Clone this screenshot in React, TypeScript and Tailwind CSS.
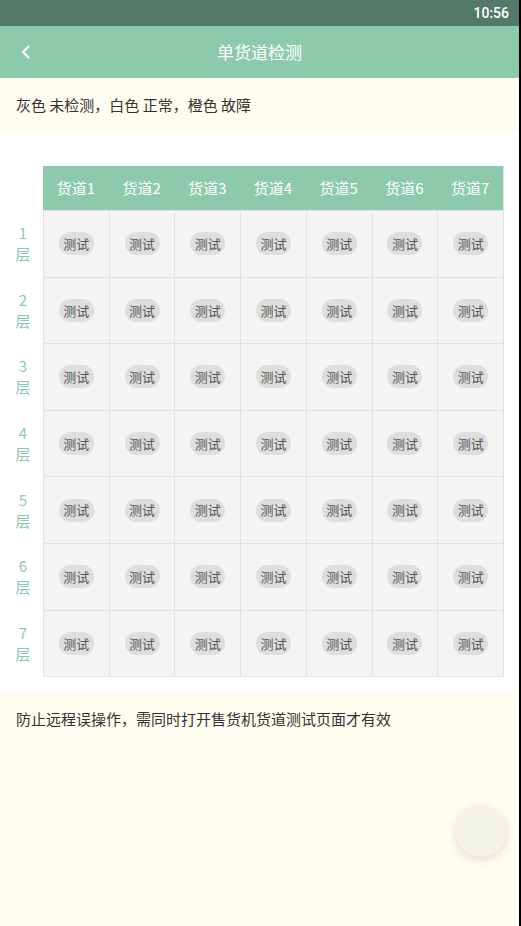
import React from "react";

const cols = [1, 2, 3, 4, 5, 6, 7];
const rows = [1, 2, 3, 4, 5, 6, 7];

export default function App() {
  return (
    <div
      className="flex w-[521px] h-[926px] overflow-hidden"
      style={{ fontFamily: '"Noto Sans CJK SC", "Noto Sans", sans-serif' }}
    >
      <div className="relative flex flex-col w-[519px] h-full bg-[#fffdf0]">
        {/* status bar */}
        <div className="h-[26px] bg-[#537a68] flex items-center justify-end pr-[10px]">
          <span
            className="text-white text-[14px] font-medium"
            style={{ fontFamily: "Roboto, sans-serif" }}
          >
            10:56
          </span>
        </div>
        {/* header */}
        <div className="relative h-[52px] bg-[#8dcaad] flex items-center justify-center">
          <svg
            className="absolute left-[20px] top-[18px]"
            width="12"
            height="16"
            viewBox="0 0 12 16"
          >
            <path d="M9 2 L3 8 L9 14" stroke="white" strokeWidth="2.2" fill="none" />
          </svg>
          <span className="text-white text-[17px]">单货道检测</span>
        </div>
        {/* legend */}
        <div className="h-[55px] flex items-center px-[16px]">
          <span className="text-[15px] text-[#333]">灰色 未检测，白色 正常，橙色 故障</span>
        </div>
        {/* table area */}
        <div className="bg-white pt-[33px] pb-[16px] flex">
          <div className="flex flex-col w-[43px] pl-[3px]">
            <div className="h-[44px]" />
            {rows.map((r) => (
              <div
                key={r}
                className="h-[66.6px] flex flex-col items-center justify-center text-[#8dcaad] text-[15px] leading-[21px]"
              >
                <span>{r}</span>
                <span>层</span>
              </div>
            ))}
          </div>
          <div className="w-[461px] flex flex-col border-r border-b border-[#e2e2e2]">
            <div className="h-[44px] bg-[#8dcaad] flex">
              {cols.map((c) => (
                <div
                  key={c}
                  className="flex-1 flex items-center justify-center text-white text-[15px]"
                >
                  货道{c}
                </div>
              ))}
            </div>
            {rows.map((r) => (
              <div key={r} className="h-[66.6px] flex border-t border-[#e2e2e2] first:border-t-0">
                {cols.map((c) => (
                  <div
                    key={c}
                    className="flex-1 bg-[#f4f4f4] border-l border-[#e2e2e2] flex items-center justify-center"
                  >
                    <span className="w-[35px] h-[23px] rounded-full bg-[#dedede] text-[13px] text-[#555] flex items-center justify-center">
                      测试
                    </span>
                  </div>
                ))}
              </div>
            ))}
          </div>
        </div>
        {/* note */}
        <div className="px-[16px] pt-[13px]">
          <span className="text-[15px] text-[#333]">防止远程误操作，需同时打开售货机货道测试页面才有效</span>
        </div>
        {/* fab */}
        <div className="absolute left-[455px] top-[805px] w-[52px] h-[52px] rounded-full bg-[#f3f3ec] shadow-[0_3px_8px_rgba(0,0,0,0.12)]" />
      </div>
      <div className="flex-1 bg-black" />
    </div>
  );
}
